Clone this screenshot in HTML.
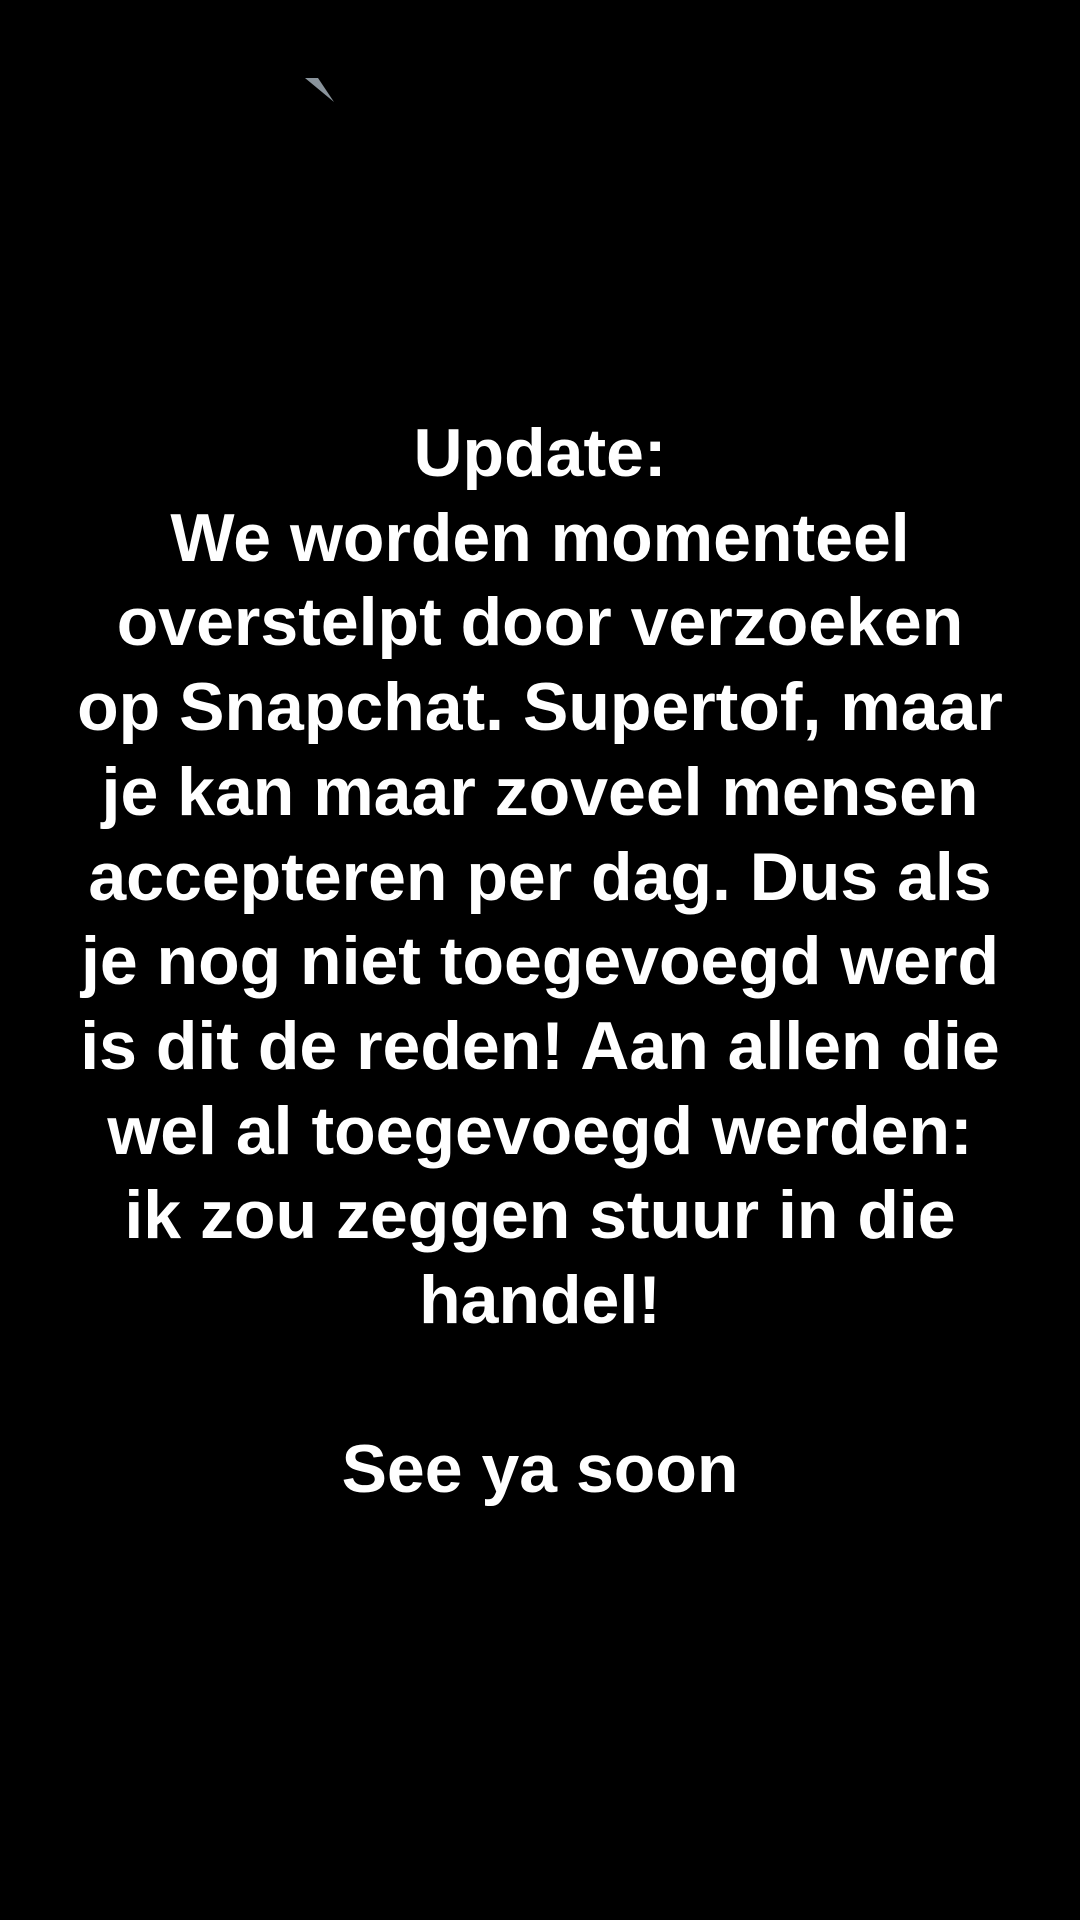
<!DOCTYPE html>
<html><head><meta charset="utf-8"><style>
html,body{margin:0;padding:0;background:#000;width:1080px;height:1920px;overflow:hidden}
.t{position:absolute;left:0;top:411px;width:1080px;text-align:center;color:#fff;font-family:"Liberation Sans",sans-serif;font-weight:bold;font-size:68px;line-height:84.7px;white-space:nowrap}
</style></head><body>
<svg style="position:absolute;left:0;top:0" width="1080" height="120"><polygon points="305,78 318,78 334,102" fill="#8a949c"/></svg>
<div class="t">Update:<br>We worden momenteel<br>overstelpt door verzoeken<br>op Snapchat. Supertof, maar<br>je kan maar zoveel mensen<br>accepteren per dag. Dus als<br>je nog niet toegevoegd werd<br>is dit de reden! Aan allen die<br>wel al toegevoegd werden:<br>ik zou zeggen stuur in die<br>handel!<br>&nbsp;<br>See ya soon</div>
</body></html>
